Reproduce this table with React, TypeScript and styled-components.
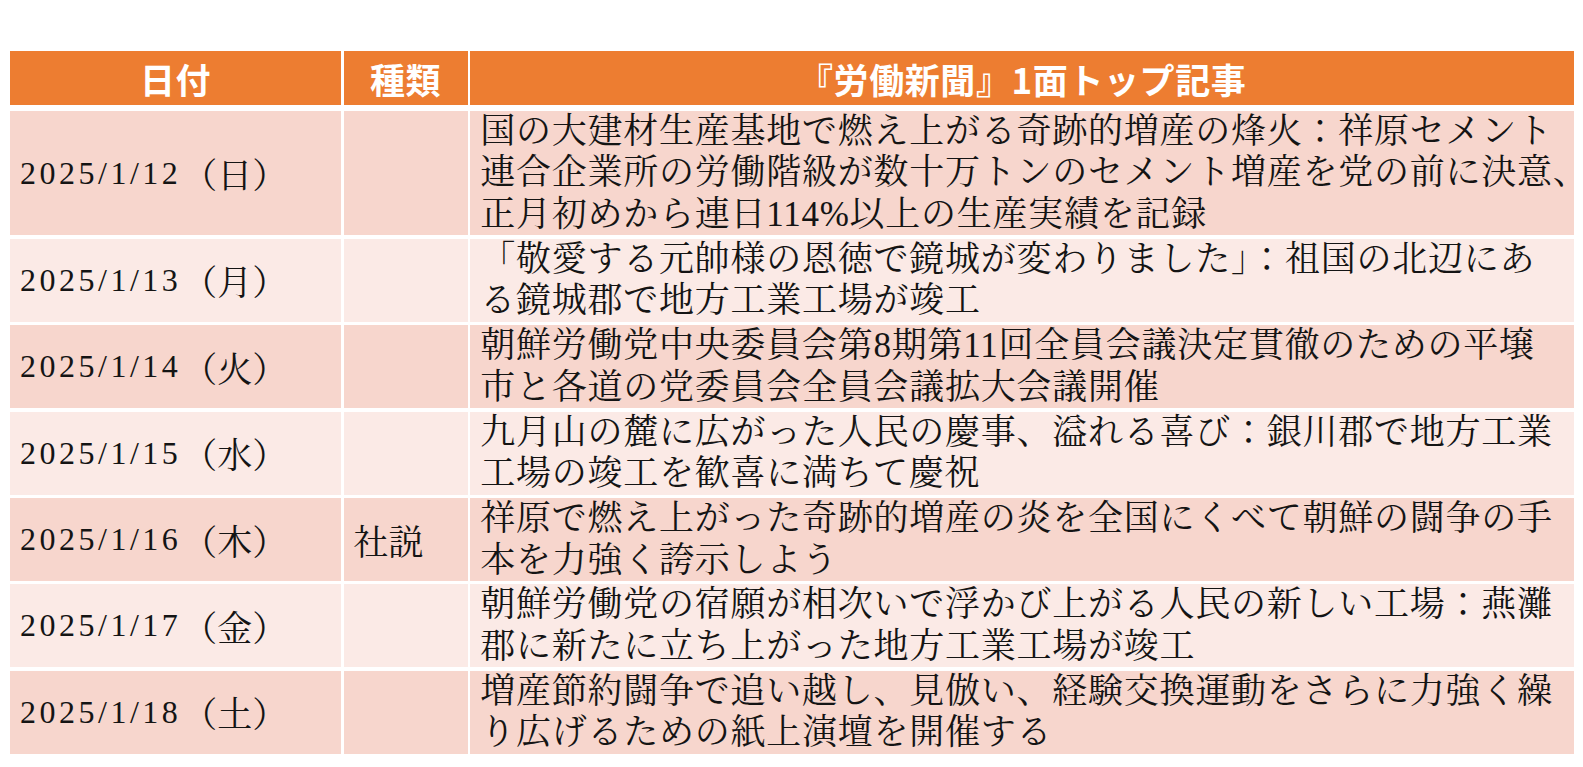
import React from "react";
import styled, { createGlobalStyle } from "styled-components";

const CJK_BODY = `"Noto Serif CJK JP", "Noto Serif JP", "IPAexMincho", "IPAMincho", "Noto Sans CJK JP DemiLight", "Noto Sans CJK JP Light", "Noto Sans CJK JP"`;

const GlobalStyle = createGlobalStyle`
  html, body {
    margin: 0;
    padding: 0;
    background: #ffffff;
  }
  body {
    font-family: "Liberation Serif", ${CJK_BODY}, serif;
    color: #141414;
  }
`;

const COLS = "331px 124px 1104px";

const Page = styled.div`
  padding: 51px 0 0 10px;
  width: 1565px;
`;

const Table = styled.div`
  display: flex;
  flex-direction: column;
  gap: 3.4px;
  width: 1564px;
`;

const HeaderRow = styled.div`
  display: grid;
  grid-template-columns: ${COLS};
  column-gap: 2.6px;
  margin-bottom: 2.6px;
`;

const HeaderCell = styled.div`
  height: 54px;
  background: #ed7d31;
  color: #ffffff;
  display: flex;
  align-items: center;
  justify-content: center;
  font-family: "Noto Sans CJK JP", "Noto Sans", sans-serif;
  font-weight: 700;
  font-size: 35px;
  letter-spacing: 0.6px;
  white-space: nowrap;
`;

const DataRow = styled.div`
  display: grid;
  grid-template-columns: ${COLS};
  column-gap: 2.6px;
`;

const Cell = styled.div<{ $band: boolean }>`
  background: ${(p) => (p.$band ? "#f7d6cd" : "#fbeae6")};
  display: flex;
  align-items: center;
  padding-left: 10px;
  font-size: 35px;
  white-space: nowrap;
  min-width: 0;
`;

const DateNum = styled.span`
  font-family: "Liberation Serif", serif;
  font-size: 32px;
  letter-spacing: 3.5px;
`;

const DateDay = styled.span`
  font-family: ${CJK_BODY}, serif;
  font-size: 35px;
  margin-left: 1px;
`;

const TypeText = styled.span`
  font-family: ${CJK_BODY}, serif;
`;

const Article = styled.div`
  line-height: 41.5px;
  letter-spacing: 0.75px;
`;

const Hang = styled.span`
  font-feature-settings: "halt" 1;
  letter-spacing: 0;
`;

type Row = {
  date: string;
  day: string;
  kind?: string;
  lines: string[];
};

const rows: Row[] = [
  {
    date: "2025/1/12",
    day: "（日）",
    lines: [
      "国の大建材生産基地で燃え上がる奇跡的増産の烽火：祥原セメント",
      "連合企業所の労働階級が数十万トンのセメント増産を党の前に決意、",
      "正月初めから連日114%以上の生産実績を記録",
    ],
  },
  {
    date: "2025/1/13",
    day: "（月）",
    lines: [
      "「敬愛する元帥様の恩徳で鏡城が変わりました」：祖国の北辺にあ",
      "る鏡城郡で地方工業工場が竣工",
    ],
  },
  {
    date: "2025/1/14",
    day: "（火）",
    lines: [
      "朝鮮労働党中央委員会第8期第11回全員会議決定貫徹のための平壌",
      "市と各道の党委員会全員会議拡大会議開催",
    ],
  },
  {
    date: "2025/1/15",
    day: "（水）",
    lines: [
      "九月山の麓に広がった人民の慶事、溢れる喜び：銀川郡で地方工業",
      "工場の竣工を歓喜に満ちて慶祝",
    ],
  },
  {
    date: "2025/1/16",
    day: "（木）",
    kind: "社説",
    lines: [
      "祥原で燃え上がった奇跡的増産の炎を全国にくべて朝鮮の闘争の手",
      "本を力強く誇示しよう",
    ],
  },
  {
    date: "2025/1/17",
    day: "（金）",
    lines: [
      "朝鮮労働党の宿願が相次いで浮かび上がる人民の新しい工場：燕灘",
      "郡に新たに立ち上がった地方工業工場が竣工",
    ],
  },
  {
    date: "2025/1/18",
    day: "（土）",
    lines: [
      "増産節約闘争で追い越し、見倣い、経験交換運動をさらに力強く繰",
      "り広げるための紙上演壇を開催する",
    ],
  },
];

function renderLine(l: string) {
  if (l.endsWith("、")) {
    return (
      <>
        {l.slice(0, -1)}
        <Hang>、</Hang>
      </>
    );
  }
  return l;
}

export default function App() {
  return (
    <>
      <GlobalStyle />
      <Page>
        <Table>
          <HeaderRow>
            <HeaderCell>日付</HeaderCell>
            <HeaderCell>種類</HeaderCell>
            <HeaderCell>『労働新聞』1面トップ記事</HeaderCell>
          </HeaderRow>
          {rows.map((r, i) => {
            const band = i % 2 === 0;
            return (
              <DataRow key={r.date}>
                <Cell $band={band}>
                  <DateNum>{r.date}</DateNum>
                  <DateDay>{r.day}</DateDay>
                </Cell>
                <Cell $band={band}>
                  <TypeText>{r.kind ?? ""}</TypeText>
                </Cell>
                <Cell $band={band}>
                  <Article>
                    {r.lines.map((l, j) => (
                      <React.Fragment key={j}>
                        {renderLine(l)}
                        {j < r.lines.length - 1 && <br />}
                      </React.Fragment>
                    ))}
                  </Article>
                </Cell>
              </DataRow>
            );
          })}
        </Table>
      </Page>
    </>
  );
}
